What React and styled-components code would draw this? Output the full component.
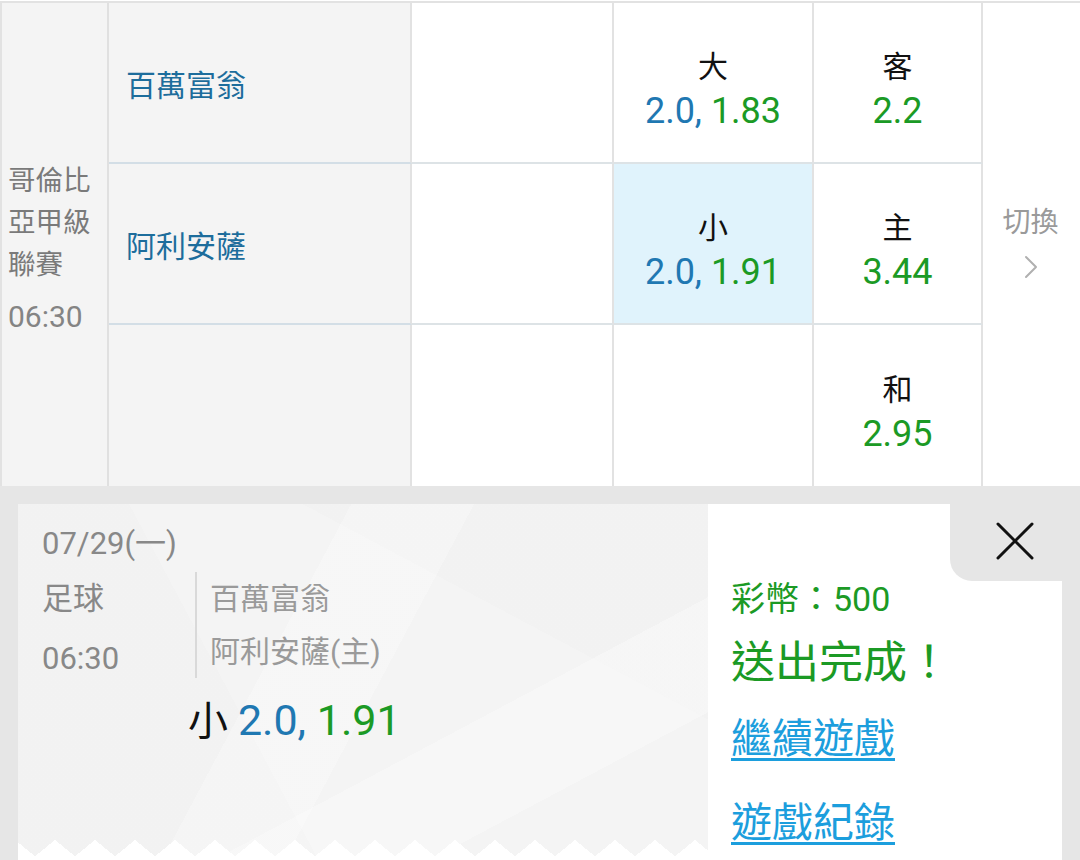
import React from 'react';
import styled, { createGlobalStyle } from 'styled-components';
import { ChevronRight } from 'lucide-react';

const GlobalStyle = createGlobalStyle`
  html, body {
    margin: 0;
    padding: 0;
    background: #fff;
    overflow: hidden;
  }
  body {
    font-family: Roboto, "Noto Sans CJK TC", "Noto Sans", sans-serif;
    -webkit-font-smoothing: antialiased;
  }
`;

const Page = styled.div`
  width: 1080px;
  height: 860px;
  overflow: hidden;
  display: flex;
  flex-direction: column;
`;

const Table = styled.div`
  display: grid;
  grid-template-columns: 107px 303px 202px 200px 169px 97px;
  grid-template-rows: 161px 161px 161px;
  margin-top: 1px;
  border-top: 2px solid #e2e2e2;
  border-left: 2px solid #e2e2e2;
`;

const LeagueCell = styled.div`
  grid-row: 1 / span 3;
  grid-column: 1;
  background: #f4f4f4;
  border-right: 2px solid #e0e0e0;
  display: flex;
  flex-direction: column;
  justify-content: center;
  padding: 8px 0 0 6px;
  color: #7a7a7a;
  font-size: 27.5px;
  line-height: 42px;
`;

const LeagueTime = styled.div`
  margin-top: 10px;
  font-size: 30px;
  color: #848484;
`;

const TeamCell = styled.div`
  background: #f4f4f4;
  border-right: 2px solid #e2e2e2;
  border-bottom: ${p => (p.$last ? 'none' : '2px solid #d3dee6')};
  display: flex;
  align-items: center;
  padding-left: 17px;
  color: #1d6d9c;
  font-size: 30px;
`;

const EmptyCell = styled.div`
  background: #fff;
  border-right: 2px solid #e2e2e2;
  border-bottom: ${p => (p.$last ? 'none' : '2px solid #dde3e6')};
`;

const OddsCell = styled.div`
  background: ${p => (p.$selected ? '#e0f3fc' : '#fff')};
  border-right: 2px solid #e2e2e2;
  border-bottom: ${p => (p.$last ? 'none' : '2px solid #dde3e6')};
  display: flex;
  flex-direction: column;
  align-items: center;
  justify-content: center;
  padding-top: 12px;
`;

const OddsLabel = styled.div`
  font-size: 30px;
  line-height: 44px;
  color: #111;
`;

const OddsValue = styled.div`
  font-size: 36px;
  line-height: 44px;
`;

const Blue = styled.span`
  color: #1f78b2;
`;

const Green = styled.span`
  color: #1b9a25;
`;

const SwitchCell = styled.div`
  grid-row: 1 / span 3;
  grid-column: 6;
  background: #fff;
  display: flex;
  flex-direction: column;
  align-items: center;
  justify-content: center;
  color: #9a9a9a;
  font-size: 28px;
  line-height: 40px;
  padding-right: 2px;
`;

const Chevron = styled(ChevronRight)`
  margin-top: 4px;
  color: #b0b0b0;
`;

const Tray = styled.div`
  flex: 1;
  background: #e6e6e6;
  padding: 18px 18px 0 18px;
  overflow: hidden;
`;

const Card = styled.div`
  display: flex;
  height: 400px;
  background: #fff;
`;

const TicketPane = styled.div`
  position: relative;
  width: 690px;
  height: 352px;
  padding: 20px 24px 0 24px;
  box-sizing: border-box;
  color: #888;
  background:
    linear-gradient(118deg, transparent 0 38%, rgba(255, 255, 255, 0.25) 38% 52%, transparent 52%),
    linear-gradient(62deg, rgba(0, 0, 0, 0.008) 0 34%, transparent 34%),
    linear-gradient(152deg, transparent 0 64%, rgba(255, 255, 255, 0.3) 64% 80%, transparent 80%),
    linear-gradient(28deg, transparent 0 70%, rgba(0, 0, 0, 0.008) 70%),
    #f4f4f4;

  &::after {
    content: '';
    position: absolute;
    left: 0;
    right: 0;
    bottom: 0;
    height: 16px;
    background: conic-gradient(from 129deg at 50% 0, #fff 102deg, transparent 0) 17px 0 / 40px 16px repeat-x;
  }
`;

const DateLine = styled.div`
  font-size: 31px;
  line-height: 40px;
`;

const InfoRow = styled.div`
  display: flex;
  align-items: flex-start;
  margin-top: 8px;
`;

const SportCol = styled.div`
  width: 153px;
  font-size: 31px;
  line-height: 60px;
  margin-top: -3px;
`;

const TeamsCol = styled.div`
  border-left: 2px solid #d9d9d9;
  padding-left: 13px;
  font-size: 30px;
  line-height: 53px;
  color: #9a9a9a;
`;

const BetLine = styled.div`
  margin: 6px 0 0 146px;
  font-size: 40px;
  line-height: 50px;
  color: #111;
`;

const BetOdds = styled.span`
  font-size: 43px;
`;

const ResultPane = styled.div`
  flex: 1;
  display: flex;
  flex-direction: column;
  align-items: flex-start;
  padding-left: 23px;
  background: #fff;
`;

const CloseTab = styled.div`
  align-self: flex-end;
  width: 112px;
  height: 77px;
  background: #e6e6e6;
  border-bottom-left-radius: 22px;
  display: flex;
  align-items: center;
  justify-content: center;
  padding-left: 18px;
  padding-bottom: 4px;
  box-sizing: border-box;
`;

const Coins = styled.div`
  margin-top: -2px;
  font-size: 34px;
  line-height: 40px;
  color: #1b9a25;
`;

const Done = styled.div`
  margin-top: 14px;
  font-size: 44px;
  line-height: 60px;
  color: #1b9a25;
`;

const Link = styled.a`
  display: inline-block;
  margin-top: ${p => p.$gap}px;
  font-size: 41px;
  line-height: 56px;
  color: #1c9edd;
  text-decoration: underline;
  text-decoration-thickness: 3px;
  text-underline-offset: 5px;
  cursor: pointer;
`;

const rows = [
  { team: '百萬富翁', ou: { label: '大', line: '2.0,', odds: '1.83' }, x: { label: '客', odds: '2.2' } },
  { team: '阿利安薩', ou: { label: '小', line: '2.0,', odds: '1.91', selected: true }, x: { label: '主', odds: '3.44' } },
  { team: '', ou: null, x: { label: '和', odds: '2.95' } },
];

function CloseIcon() {
  return (
    <svg width="40" height="40" viewBox="0 0 40 40">
      <path d="M3 3 L37 37 M37 3 L3 37" stroke="#111" strokeWidth="3" strokeLinecap="round" fill="none" />
    </svg>
  );
}

function App() {
  return (
    <Page>
      <GlobalStyle />
      <Table>
        <LeagueCell>
          <div>哥倫比</div>
          <div>亞甲級</div>
          <div>聯賽</div>
          <LeagueTime>06:30</LeagueTime>
        </LeagueCell>
        {rows.map((r, i) => {
          const last = i === rows.length - 1;
          return (
            <React.Fragment key={i}>
              <TeamCell $last={last} style={{ gridRow: i + 1, gridColumn: 2 }}>{r.team}</TeamCell>
              <EmptyCell $last={last} style={{ gridRow: i + 1, gridColumn: 3 }} />
              <OddsCell $last={last} $selected={r.ou && r.ou.selected} style={{ gridRow: i + 1, gridColumn: 4 }}>
                {r.ou && (
                  <>
                    <OddsLabel>{r.ou.label}</OddsLabel>
                    <OddsValue>
                      <Blue>{r.ou.line}</Blue> <Green>{r.ou.odds}</Green>
                    </OddsValue>
                  </>
                )}
              </OddsCell>
              <OddsCell $last={last} style={{ gridRow: i + 1, gridColumn: 5 }}>
                <OddsLabel>{r.x.label}</OddsLabel>
                <OddsValue>
                  <Green>{r.x.odds}</Green>
                </OddsValue>
              </OddsCell>
            </React.Fragment>
          );
        })}
        <SwitchCell>
          <div>切換</div>
          <Chevron size={40} strokeWidth={1.2} />
        </SwitchCell>
      </Table>

      <Tray>
        <Card>
          <TicketPane>
            <DateLine>07/29(一)</DateLine>
            <InfoRow>
              <SportCol>
                <div>足球</div>
                <div>06:30</div>
              </SportCol>
              <TeamsCol>
                <div>百萬富翁</div>
                <div>阿利安薩(主)</div>
              </TeamsCol>
            </InfoRow>
            <BetLine>
              小 <BetOdds><Blue>2.0,</Blue> <Green>1.91</Green></BetOdds>
            </BetLine>
          </TicketPane>
          <ResultPane>
            <CloseTab>
              <CloseIcon />
            </CloseTab>
            <Coins>彩幣：500</Coins>
            <Done>送出完成！</Done>
            <Link $gap={18}>繼續遊戲</Link>
            <Link $gap={28}>遊戲紀錄</Link>
          </ResultPane>
        </Card>
      </Tray>
    </Page>
  );
}

export default App;
